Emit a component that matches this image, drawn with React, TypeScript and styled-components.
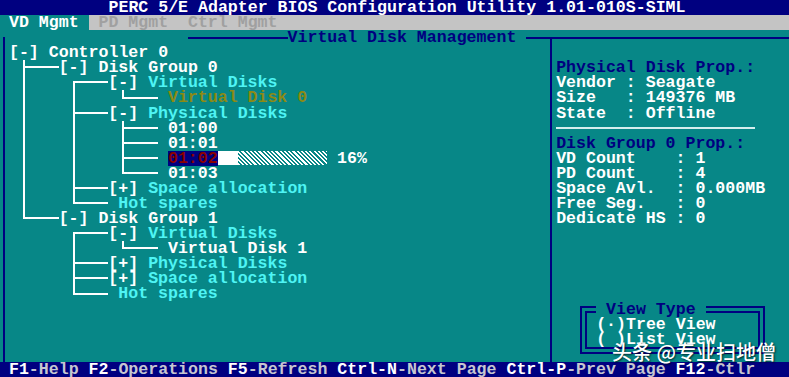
import styled, { createGlobalStyle } from "styled-components";

// text-mode grid: 80 x 25 cells
const CW = 9.95;
const RH = 15.08;

const TEAL = "#078787";
const NAVY = "#000080";
const WHITE = "#ffffff";
const CYAN = "#4ef4f4";
const OLIVE = "#8c8a14";
const MAROON = "#8a0000";
const GREY = "#c4c4c4";

const GlobalStyle = createGlobalStyle`
  html, body {
    margin: 0;
    padding: 0;
    overflow: hidden;
    background: ${TEAL};
  }
`;

const Screen = styled.div`
  position: relative;
  width: ${80 * CW}px;
  height: ${25 * RH}px;
  margin-left: -1px;
  display: flex;
  flex-direction: column;
  background: ${TEAL};
  color: ${WHITE};
  font-family: "Liberation Mono", "DejaVu Sans Mono", monospace;
  font-weight: 700;
  font-size: 16.58px;
  line-height: ${RH}px;
  white-space: pre;
`;

const TitleBar = styled.div`
  height: ${RH}px;
  background: ${NAVY};
  text-align: center;
`;

const TabBar = styled.div`
  display: flex;
  height: ${RH}px;
  background: ${GREY};
`;

const Tab = styled.div<{ $active?: boolean }>`
  padding: 0 ${CW}px;
  background: ${(p) => (p.$active ? TEAL : "transparent")};
  color: ${(p) => (p.$active ? WHITE : "#a0a0a0")};
`;

const Frame = styled.div`
  flex: 1;
  display: flex;
  min-height: 0;
`;

const VRule = styled.div<{ $tee?: boolean }>`
  flex: none;
  width: ${CW}px;
  background: ${(p) =>
      p.$tee ? `linear-gradient(${NAVY}, ${NAVY}) 0 ${RH / 2 - 1}px / 100% 2px no-repeat,` : ""}
    linear-gradient(${NAVY}, ${NAVY}) center ${RH / 2 - 1}px / 2px 100% no-repeat;
`;

const TreePane = styled.div`
  flex: none;
  width: ${54 * CW}px;
  display: flex;
  flex-direction: column;
`;

const PropsPane = styled.div`
  flex: 1;
  display: flex;
  flex-direction: column;
`;

const PaneHead = styled.div`
  display: flex;
  align-items: center;
  height: ${RH}px;
`;

const Gap = styled.div<{ $cols: number }>`
  flex: none;
  width: ${(p) => p.$cols * CW}px;
`;

const HRule = styled.div<{ $cols?: number; $color?: string }>`
  flex: ${(p) => (p.$cols ? "none" : "1")};
  width: ${(p) => (p.$cols ? `${p.$cols * CW}px` : "auto")};
  height: 2px;
  background: ${(p) => p.$color ?? NAVY};
`;

const PaneTitle = styled.span`
  color: ${NAVY};
`;

const Row = styled.div`
  height: ${RH}px;
`;

const RuleRow = styled.div`
  display: flex;
  align-items: center;
  height: ${RH}px;
`;

// tree connector cells, drawn like the text-mode line characters
type Kind = " " | "│" | "├" | "└" | "┌" | "─";

const HY = RH / 2 - 1.5;
const line = (x: string, y: string, w: string, h: string) =>
  `linear-gradient(${WHITE}, ${WHITE}) ${x} ${y} / ${w} ${h} no-repeat`;
const vFull = line(`${CW / 2 - 1}px`, "0", "2px", "100%");
const vTop = line(`${CW / 2 - 1}px`, "0", "2px", `${HY + 2}px`);
const vBottom = line(`${CW / 2 - 1}px`, `${HY}px`, "2px", `${RH - HY}px`);
const hRight = line(`${CW / 2 - 1}px`, `${HY}px`, `${CW / 2 + 1}px`, "2px");
const hFull = line("0", `${HY}px`, "100%", "2px");

const strokes: Record<Kind, string> = {
  " ": "none",
  "│": vFull,
  "├": `${hRight}, ${vFull}`,
  "└": `${hRight}, ${vTop}`,
  "┌": `${hRight}, ${vBottom}`,
  "─": hFull,
};

const Cell = styled.span<{ $kind: Kind }>`
  display: inline-block;
  vertical-align: top;
  width: ${CW}px;
  height: ${RH}px;
  background: ${(p) => strokes[p.$kind]};
`;

type Tone = "white" | "cyan" | "olive";

const toneColor: Record<Tone, string> = {
  white: WHITE,
  cyan: CYAN,
  olive: OLIVE,
};

const Label = styled.span<{ $tone: Tone; $selected?: boolean }>`
  display: inline-block;
  height: ${RH}px;
  vertical-align: top;
  color: ${(p) => (p.$selected ? MAROON : toneColor[p.$tone])};
  background: ${(p) => (p.$selected ? NAVY : "transparent")};
`;

const Fill = styled.span<{ $cols: number }>`
  display: inline-block;
  vertical-align: top;
  width: ${(p) => p.$cols * CW}px;
  height: 14px;
  margin-top: 0.5px;
  background: ${WHITE};
`;

const Track = styled.span<{ $cols: number }>`
  display: inline-block;
  vertical-align: top;
  width: ${(p) => p.$cols * CW}px;
  height: 14px;
  margin-top: 0.5px;
  background: repeating-linear-gradient(45deg, ${WHITE} 0 1.5px, transparent 1.5px 3px);
`;

const Heading = styled(Row)`
  color: ${NAVY};
`;

const ViewBox = styled.fieldset`
  box-sizing: border-box;
  width: 184.5px;
  min-width: 0;
  margin: auto 0 8px 24px;
  padding: 0 0 0 9px;
  border: 7px double ${NAVY};
`;

const ViewLegend = styled.legend`
  padding: 0 ${CW}px;
  color: ${NAVY};
`;

const Footer = styled.div`
  height: ${RH}px;
  padding-left: ${CW}px;
  background: ${NAVY};
  color: #c6c6d0;
`;

const Key = styled.span`
  color: ${WHITE};
`;

const Watermark = styled.div`
  position: absolute;
  left: 613px;
  top: 342px;
  font-family: "Noto Sans CJK SC", "Noto Sans", sans-serif;
  font-size: 20px;
  font-weight: 500;
  line-height: 20px;
  color: ${WHITE};
  text-shadow: 1px 1px 2px rgba(0, 0, 0, 0.7);
`;

interface TreeNode {
  lines: string;
  toggle?: string;
  label: string;
  tone: Tone;
  selected?: boolean;
  progress?: number;
}

const tree: TreeNode[] = [
  { lines: "", toggle: "[-]", label: "Controller 0", tone: "white" },
  { lines: " ├───", toggle: "[-]", label: "Disk Group 0", tone: "white" },
  { lines: " │    ┌───", toggle: "[-]", label: "Virtual Disks", tone: "cyan" },
  { lines: " │    │    └─── ", label: "Virtual Disk 0", tone: "olive" },
  { lines: " │    ├───", toggle: "[-]", label: "Physical Disks", tone: "cyan" },
  { lines: " │    │    ├─── ", label: "01:00", tone: "white" },
  { lines: " │    │    ├─── ", label: "01:01", tone: "white" },
  { lines: " │    │    ├─── ", label: "01:02", tone: "white", selected: true, progress: 16 },
  { lines: " │    │    └─── ", label: "01:03", tone: "white" },
  { lines: " │    ├───", toggle: "[+]", label: "Space allocation", tone: "cyan" },
  { lines: " │    └─── ", label: "Hot spares", tone: "cyan" },
  { lines: " └───", toggle: "[-]", label: "Disk Group 1", tone: "white" },
  { lines: "      ┌───", toggle: "[-]", label: "Virtual Disks", tone: "cyan" },
  { lines: "      │    └─── ", label: "Virtual Disk 1", tone: "white" },
  { lines: "      ├───", toggle: "[+]", label: "Physical Disks", tone: "cyan" },
  { lines: "      ├───", toggle: "[+]", label: "Space allocation", tone: "cyan" },
  { lines: "      └─── ", label: "Hot spares", tone: "cyan" },
];

const diskProps = [
  ["Vendor", "Seagate"],
  ["Size", "149376 MB"],
  ["State", "Offline"],
];

const groupProps = [
  ["VD Count", "1"],
  ["PD Count", "4"],
  ["Space Avl.", "0.000MB"],
  ["Free Seg.", "0"],
  ["Dedicate HS", "0"],
];

const keys = [
  ["F1", "-Help"],
  ["F2", "-Operations"],
  ["F5", "-Refresh"],
  ["Ctrl-N", "-Next Page"],
  ["Ctrl-P", "-Prev Page"],
  ["F12", "-Ctlr"],
];

const TreeRow = ({ node }: { node: TreeNode }) => (
  <Row>
    {Array.from(node.lines).map((ch, i) => (
      <Cell key={i} $kind={ch as Kind} />
    ))}
    {node.toggle && <span>{node.toggle} </span>}
    <Label $tone={node.tone} $selected={node.selected}>
      {node.label}
    </Label>
    {node.progress !== undefined && (
      <>
        <Fill $cols={2} />
        <Track $cols={9} />
        <span> {node.progress}%</span>
      </>
    )}
  </Row>
);

export default function App() {
  return (
    <>
      <GlobalStyle />
      <Screen>
        <TitleBar>PERC 5/E Adapter BIOS Configuration Utility 1.01-010S-SIML</TitleBar>
        <TabBar>
          <Tab $active>VD Mgmt</Tab>
          <Tab>PD Mgmt</Tab>
          <Tab>Ctrl Mgmt</Tab>
        </TabBar>

        <Frame>
          <VRule />
          <TreePane>
            <PaneHead>
              <Gap $cols={18} />
              <HRule $cols={10} />
              <PaneTitle>Virtual Disk Management</PaneTitle>
              <Gap $cols={1} />
              <HRule />
            </PaneHead>
            {tree.map((node, i) => (
              <TreeRow key={i} node={node} />
            ))}
          </TreePane>
          <VRule $tee />
          <PropsPane>
            <PaneHead>
              <HRule />
            </PaneHead>
            <Row />
            <Heading>Physical Disk Prop.:</Heading>
            {diskProps.map(([k, v]) => (
              <Row key={k}>{`${k.padEnd(6)} : ${v}`}</Row>
            ))}
            <RuleRow>
              <HRule $cols={20} $color="#d4eeee" />
            </RuleRow>
            <Heading>Disk Group 0 Prop.:</Heading>
            {groupProps.map(([k, v]) => (
              <Row key={k}>{`${k.padEnd(11)} : ${v}`}</Row>
            ))}
            <ViewBox>
              <ViewLegend>View Type</ViewLegend>
              <Row>(·)Tree View</Row>
              <Row>( )List View</Row>
            </ViewBox>
          </PropsPane>
        </Frame>

        <Footer>
          {keys.map(([k, d], i) => (
            <span key={k}>
              {i > 0 && " "}
              <Key>{k}</Key>
              {d}
            </span>
          ))}
        </Footer>

        <Watermark>头条 @专业扫地僧</Watermark>
      </Screen>
    </>
  );
}
